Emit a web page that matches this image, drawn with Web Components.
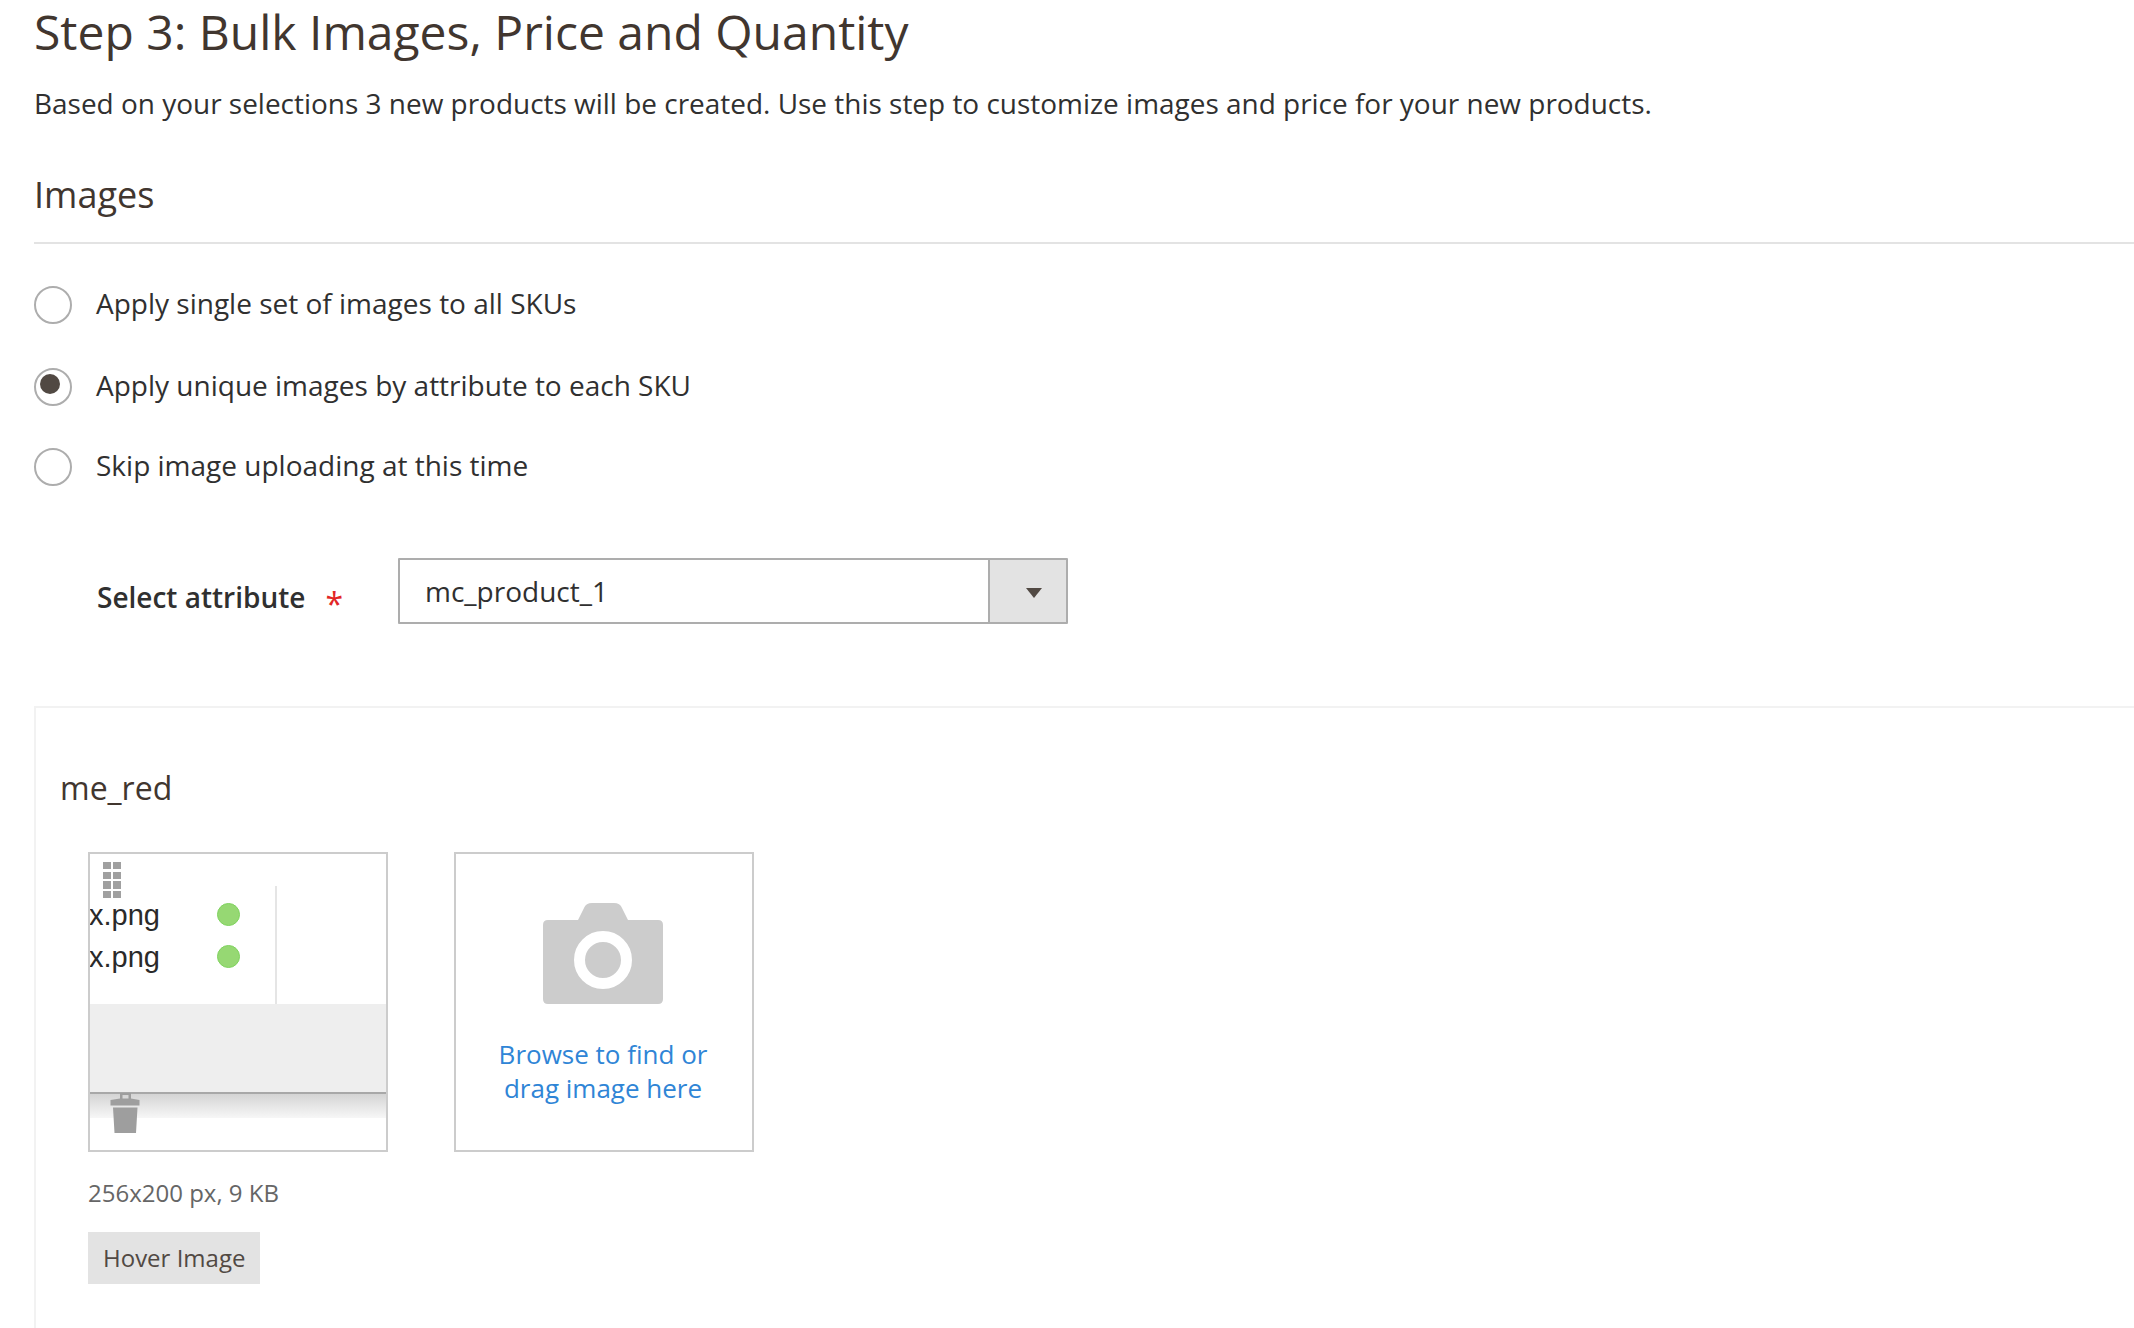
<!DOCTYPE html>
<html lang="en">
<head>
<meta charset="utf-8">
<title>Step 3: Bulk Images, Price and Quantity</title>
<style>
  html, body { margin: 0; padding: 0; background: #fff; overflow: hidden; }
  body { font-family: "Open Sans", "Liberation Sans", sans-serif; color: #303030; }
</style>
</head>
<body>
<bulk-step>
  <span slot="title">Step 3: Bulk Images, Price and Quantity</span>
  <span slot="intro">Based on your selections 3 new products will be created. Use this step to customize images and price for your new products.</span>
  <section-heading>Images</section-heading>
  <radio-list>
    <radio-option>Apply single set of images to all SKUs</radio-option>
    <radio-option checked>Apply unique images by attribute to each SKU</radio-option>
    <radio-option>Skip image uploading at this time</radio-option>
  </radio-list>
  <attribute-select label="Select attribute" value="mc_product_1"></attribute-select>
  <image-panel name="me_red">
    <image-tile></image-tile>
    <upload-tile></upload-tile>
    <span slot="size">256x200 px, 9 KB</span>
    <span slot="role">Hover Image</span>
  </image-panel>
</bulk-step>

<script>
class BulkStep extends HTMLElement {
  constructor() {
    super();
    this.attachShadow({ mode: "open" });
    this.shadowRoot.innerHTML = `
      <style>
        :host { display: block; padding-left: 34px; }
        h1 {
          margin: 0;
          font-size: 48px;
          font-weight: 400;
          line-height: 64px;
          color: #41362f;
        }
        p {
          margin: 21px 0 0;
          font-size: 27.96px;
          line-height: 36px;
          color: #303030;
        }
      </style>
      <h1><slot name="title"></slot></h1>
      <p><slot name="intro"></slot></p>
      <slot></slot>
    `;
  }
}
customElements.define("bulk-step", BulkStep);

class SectionHeading extends HTMLElement {
  constructor() {
    super();
    this.attachShadow({ mode: "open" });
    this.shadowRoot.innerHTML = `
      <style>
        :host {
          display: block;
          margin-top: 49px;
          padding-bottom: 22px;
          border-bottom: 2px solid #e3e3e3;
          font-size: 36px;
          line-height: 50px;
          color: #41362f;
        }
      </style>
      <slot></slot>
    `;
  }
}
customElements.define("section-heading", SectionHeading);

class RadioList extends HTMLElement {
  constructor() {
    super();
    this.attachShadow({ mode: "open" });
    this.shadowRoot.innerHTML = `
      <style>
        :host {
          display: flex;
          flex-direction: column;
          gap: 42px;
          margin-top: 42px;
        }
      </style>
      <slot></slot>
    `;
  }
}
customElements.define("radio-list", RadioList);

class RadioOption extends HTMLElement {
  constructor() {
    super();
    this.attachShadow({ mode: "open" });
    this.shadowRoot.innerHTML = `
      <style>
        :host {
          display: flex;
          align-items: center;
          gap: 24px;
          height: 38px;
          font-size: 28px;
          color: #303030;
        }
        :host([checked]) { margin-top: 2px; }
        .ring {
          position: relative;
          box-sizing: border-box;
          flex: none;
          width: 38px;
          height: 38px;
          border: 2px solid #adadad;
          border-radius: 50%;
          background: #fff;
        }
        :host([checked]) .ring::after {
          content: "";
          position: absolute;
          left: 4px;
          top: 4px;
          width: 20px;
          height: 20px;
          border-radius: 50%;
          background: #514943;
        }
        .text { margin-top: -4px; line-height: 38px; }
      </style>
      <span class="ring"></span>
      <span class="text"><slot></slot></span>
    `;
  }
}
customElements.define("radio-option", RadioOption);

class AttributeSelect extends HTMLElement {
  constructor() {
    super();
    this.attachShadow({ mode: "open" });
  }

  connectedCallback() {
    const label = this.getAttribute("label") || "";
    const value = this.getAttribute("value") || "";

    this.shadowRoot.innerHTML = `
      <style>
        :host {
          display: flex;
          margin-top: 72px;
          padding-left: 63px;
          font-size: 28px;
          color: #303030;
        }
        .label {
          display: flex;
          align-items: center;
          flex: none;
          width: 301px;
          margin-top: 12px;
          height: 54px;
          font-weight: 600;
        }
        .star {
          margin-left: 20px;
          font-size: 32px;
          font-weight: 400;
          line-height: 54px;
          color: #e22626;
          position: relative;
          top: 7px;
        }
        .control {
          display: flex;
          box-sizing: border-box;
          width: 670px;
          height: 66px;
          border: 2px solid #adadad;
          border-radius: 1px;
        }
        .value {
          flex: 1;
          padding-left: 25px;
          line-height: 62px;
        }
        .button {
          display: flex;
          align-items: center;
          box-sizing: border-box;
          width: 78px;
          padding: 3px 0 0 36px;
          border-left: 2px solid #adadad;
          background: #e3e3e3;
        }
        .arrow {
          width: 0;
          height: 0;
          border-left: 8px solid transparent;
          border-right: 8px solid transparent;
          border-top: 10px solid #514943;
        }
      </style>
      <div class="label"><span>${label}</span><span class="star">*</span></div>
      <div class="control">
        <div class="value">${value}</div>
        <div class="button"><span class="arrow"></span></div>
      </div>
    `;
  }
}
customElements.define("attribute-select", AttributeSelect);

class ImagePanel extends HTMLElement {
  constructor() {
    super();
    this.attachShadow({ mode: "open" });
  }

  connectedCallback() {
    const name = this.getAttribute("name") || "";

    this.shadowRoot.innerHTML = `
      <style>
        :host {
          display: block;
          margin-top: 82px;
          padding: 60px 0 60px 24px;
          border-top: 2px solid #f2f2f2;
          border-left: 2px solid #f2f2f2;
        }
        .name {
          font-size: 32px;
          line-height: 40px;
          color: #41362f;
        }
        .body { margin: 44px 0 0 28px; }
        .tiles { display: flex; gap: 66px; }
        .size {
          margin-top: 23px;
          font-size: 24px;
          line-height: 36px;
          color: #666;
        }
        .role {
          display: inline-block;
          margin-top: 21px;
          padding: 0 15px;
          font-size: 24px;
          line-height: 52px;
          background: #e3e3e3;
          color: #514943;
        }
      </style>
      <div class="name">${name}</div>
      <div class="body">
        <div class="tiles"><slot></slot></div>
        <div class="size"><slot name="size"></slot></div>
        <div class="role"><slot name="role"></slot></div>
      </div>
    `;
  }
}
customElements.define("image-panel", ImagePanel);

class ImageTile extends HTMLElement {
  constructor() {
    super();
    this.attachShadow({ mode: "open" });
    this.shadowRoot.innerHTML = `
      <style>
        :host {
          display: block;
          position: relative;
          box-sizing: border-box;
          width: 300px;
          height: 300px;
          border: 2px solid #ccc;
          background: #fff;
          overflow: hidden;
        }
        .files {
          box-sizing: border-box;
          width: 187px;
          height: 118px;
          margin-top: 32px;
          padding-top: 8px;
          border-right: 2px solid #e5e5e5;
        }
        .file {
          display: flex;
          align-items: center;
          height: 42px;
          margin-left: -1px;
          font: 29px "Liberation Sans", Arial, sans-serif;
          color: #2a2a2a;
        }
        .file span { width: 128px; }
        .file i {
          box-sizing: border-box;
          width: 23px;
          height: 23px;
          margin-top: -2px;
          border: 1px solid #7fd35e;
          border-radius: 50%;
          background: #96d873;
        }
        .band { height: 88px; background: #eee; }
        .fade {
          box-sizing: border-box;
          height: 26px;
          border-top: 2px solid #a8a8a8;
          background: linear-gradient(#d4d4d4, #f7f7f7);
        }
        .grip {
          position: absolute;
          left: 13px;
          top: 8px;
          display: grid;
          grid-template-columns: 8px 8px;
          grid-auto-rows: 7.4px;
          gap: 2.2px;
        }
        .grip b { background: #a0a0a0; }
        .trash { position: absolute; left: 20px; top: 239px; }
      </style>
      <div class="files">
        <div class="file"><span>x.png</span><i></i></div>
        <div class="file"><span>x.png</span><i></i></div>
      </div>
      <div class="band"></div>
      <div class="fade"></div>
      <div class="grip"><b></b><b></b><b></b><b></b><b></b><b></b><b></b><b></b></div>
      <svg class="trash" width="30" height="40" viewBox="0 0 30 40">
        <path fill="#9e9e9e" d="M10 0h11v5.500l8.500 1.500v5.500H.500V7L10 5.500zM12.500 2v3.500h6V2zM3 14.500h24.500L26 40H4.500z"/>
      </svg>
    `;
  }
}
customElements.define("image-tile", ImageTile);

class UploadTile extends HTMLElement {
  constructor() {
    super();
    this.attachShadow({ mode: "open" });
    this.shadowRoot.innerHTML = `
      <style>
        :host {
          display: flex;
          flex-direction: column;
          align-items: center;
          box-sizing: border-box;
          width: 300px;
          height: 300px;
          padding: 49px 2px 0 0;
          border: 2px solid #ccc;
          background: #fff;
        }
        svg { display: block; flex: none; }
        .text {
          margin-top: 33px;
          font-size: 26px;
          line-height: 34px;
          text-align: center;
          color: #2f85d6;
        }
      </style>
      <svg width="120" height="101" viewBox="0 0 120 101">
        <path fill="#ccc" d="M35 17l6-12q2-5 8-5h22q6 0 8 5l6 12h30q5 0 5 5v74q0 5-5 5H5q-5 0-5-5V22q0-5 5-5z"/>
        <circle cx="60" cy="57" r="23.500" fill="#ccc" stroke="#fff" stroke-width="11"/>
      </svg>
      <div class="text">Browse to find or<br>drag image here</div>
    `;
  }
}
customElements.define("upload-tile", UploadTile);
</script>
</body>
</html>
